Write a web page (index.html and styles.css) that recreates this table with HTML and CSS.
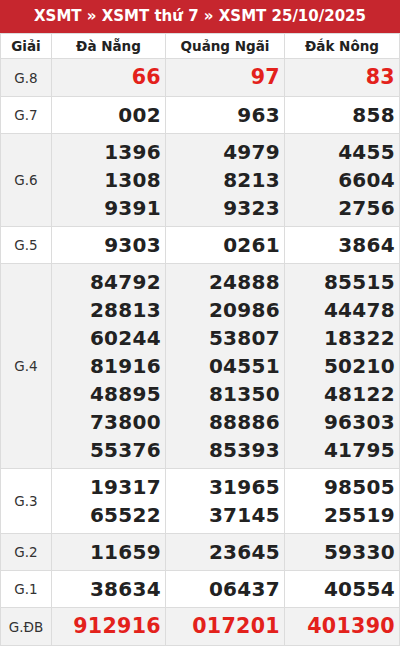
FILE: index.html
```html
<!DOCTYPE html>
<html lang="vi">
<head>
<meta charset="utf-8">
<link rel="stylesheet" href="styles.css">
</head>
<body>
<div class="box">
  <div class="title">XSMT » XSMT thứ 7 » XSMT 25/10/2025</div>
  <table class="kq">
    <thead>
      <tr><th class="c-g">Giải</th><th class="c-1">Đà Nẵng</th><th class="c-2">Quảng Ngãi</th><th class="c-3">Đắk Nông</th></tr>
    </thead>
    <tbody>
      <tr class="alt big"><td class="g">G.8</td><td class="red">66</td><td class="red">97</td><td class="red">83</td></tr>
      <tr><td class="g">G.7</td><td>002</td><td>963</td><td>858</td></tr>
      <tr class="alt"><td class="g">G.6</td><td>1396<br>1308<br>9391</td><td>4979<br>8213<br>9323</td><td>4455<br>6604<br>2756</td></tr>
      <tr><td class="g">G.5</td><td>9303</td><td>0261</td><td>3864</td></tr>
      <tr class="alt"><td class="g">G.4</td><td>84792<br>28813<br>60244<br>81916<br>48895<br>73800<br>55376</td><td>24888<br>20986<br>53807<br>04551<br>81350<br>88886<br>85393</td><td>85515<br>44478<br>18322<br>50210<br>48122<br>96303<br>41795</td></tr>
      <tr><td class="g">G.3</td><td>19317<br>65522</td><td>31965<br>37145</td><td>98505<br>25519</td></tr>
      <tr class="alt"><td class="g">G.2</td><td>11659</td><td>23645</td><td>59330</td></tr>
      <tr><td class="g">G.1</td><td>38634</td><td>06437</td><td>40554</td></tr>
      <tr class="alt big"><td class="g">G.ĐB</td><td class="red">912916</td><td class="red">017201</td><td class="red">401390</td></tr>
    </tbody>
  </table>
</div>
</body>
</html>
```
FILE: styles.css
```css
html, body {
  margin: 0;
  padding: 0;
  background: #fff;
}
body {
  font-family: "DejaVu Sans", sans-serif;
  color: #222;
}
.box {
  width: 400px;
}
.title {
  height: 33px;
  line-height: 33px;
  background: #c6262e;
  color: #fff;
  font-weight: bold;
  font-size: 15px;
  text-align: center;
}
.kq {
  width: 100%;
  border-collapse: collapse;
  table-layout: fixed;
  border: 1px solid #dcdcdc;
  border-top: 0;
}
.kq th, .kq td {
  border: 1px solid #dcdcdc;
}
.kq th {
  height: 24px;
  padding: 0;
  font-size: 13.5px;
  font-weight: bold;
  text-align: center;
  background: #fff;
}
.c-g { width: 50px; }
.c-1 { width: 113px; }
.c-2 { width: 118px; }
.c-3 { width: auto; }
.kq td {
  padding: 4px 4px 4px 0;
  font-size: 20px;
  font-weight: bold;
  line-height: 28px;
  text-align: right;
  letter-spacing: 0.3px;
}
.kq td.g {
  padding: 0;
  font-size: 13.5px;
  font-weight: normal;
  color: #333;
  text-align: center;
  letter-spacing: 0;
}
.kq tr.alt td {
  background: #f2f2f2;
}
.kq td.red {
  color: #e3211b;
  font-size: 20.6px;
  line-height: 29px;
}
```
